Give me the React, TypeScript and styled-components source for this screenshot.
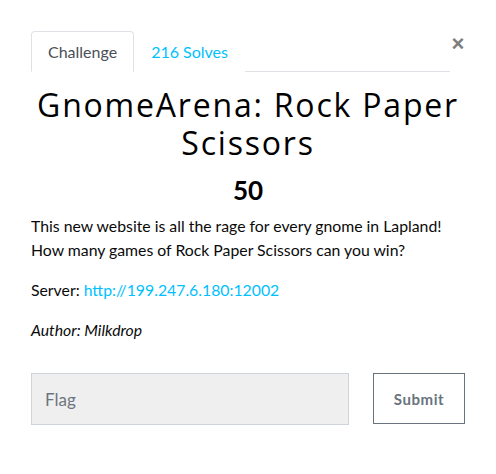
import React from 'react';
import styled, { createGlobalStyle } from 'styled-components';

const GlobalStyle = createGlobalStyle`
  html, body {
    margin: 0;
    padding: 0;
    background: #fff;
  }
  * {
    box-sizing: border-box;
  }
`;

export default function App() {
  return (
    <>
      <GlobalStyle />
      <Modal>
        <Header>
          <Tabs>
            <Tab $active>Challenge</Tab>
            <Tab>216 Solves</Tab>
          </Tabs>
          <Close aria-label="Close">×</Close>
        </Header>
        <Title>GnomeArena: Rock Paper Scissors</Title>
        <Points>50</Points>
        <Description>
          This new website is all the rage for every gnome in Lapland!
          <br />
          How many games of Rock Paper Scissors can you win?
        </Description>
        <Description>
          Server: <Link href="#">http://199.247.6.180:12002</Link>
        </Description>
        <Description>
          <em>Author: Milkdrop</em>
        </Description>
        <FlagForm onSubmit={(e) => e.preventDefault()}>
          <FlagInput placeholder="Flag" />
          <SubmitButton type="submit">Submit</SubmitButton>
        </FlagForm>
      </Modal>
    </>
  );
}

const Modal = styled.div`
  width: 496px;
  height: 474px;
  padding: 31px 31px 0 31px;
  font-family: Lato, "Liberation Sans", sans-serif;
  color: #212529;
`;

const Header = styled.div`
  display: flex;
  align-items: flex-start;
`;

const Tabs = styled.ul`
  flex: 1;
  display: flex;
  margin: 0;
  padding: 0;
  list-style: none;
  border-bottom: 1px solid #dee2e6;
`;

const Tab = styled.li<{ $active?: boolean }>`
  height: 41px;
  margin-bottom: -1px;
  padding: 0 16px;
  display: flex;
  align-items: center;
  font-size: 16px;
  border: 1px solid ${(p) => (p.$active ? '#dee2e6' : 'transparent')};
  border-bottom-color: ${(p) => (p.$active ? '#fff' : 'transparent')};
  border-radius: 4px 4px 0 0;
  background: #fff;
  color: ${(p) => (p.$active ? '#495057' : '#00bfff')};
`;

const Close = styled.button`
  width: 14px;
  margin-left: 1px;
  padding: 0;
  border: none;
  background: none;
  font-family: "Liberation Sans", Arial, sans-serif;
  font-size: 22px;
  font-weight: 700;
  line-height: 22px;
  margin-top: 2px;
  color: #7d7d7d;
`;

const Title = styled.h1`
  margin: 14px 0 0;
  text-align: center;
  font-family: "Open Sans", sans-serif;
  font-weight: 400;
  font-size: 32px;
  letter-spacing: 1.8px;
  line-height: 38px;
  color: #000;
`;

const Points = styled.h3`
  margin: 12px 0 8px;
  text-align: center;
  font-size: 26px;
  font-weight: 700;
  line-height: 32px;
  color: #000;
`;

const Description = styled.p`
  margin: 0 0 16px;
  font-size: 15.8px;
  line-height: 24px;
  color: #0a0a0a;
`;

const Link = styled.a`
  color: #00bfff;
  text-decoration: none;
`;

const FlagForm = styled.form`
  display: flex;
  gap: 24px;
  margin-top: 31px;
`;

const FlagInput = styled.input`
  width: 318px;
  height: 52px;
  padding: 0 13px;
  border: 1px solid #ced4da;
  background: #efefef;
  font-family: Lato, sans-serif;
  font-size: 17px;
  color: #495057;
  outline: none;

  &::placeholder {
    color: #6c757d;
  }
`;

const SubmitButton = styled.button`
  width: 92px;
  height: 51px;
  border: 1px solid #68737d;
  background: #fff;
  font-family: Lato, sans-serif;
  font-size: 15px;
  font-weight: 700;
  letter-spacing: 0.6px;
  color: #68737d;
`;
